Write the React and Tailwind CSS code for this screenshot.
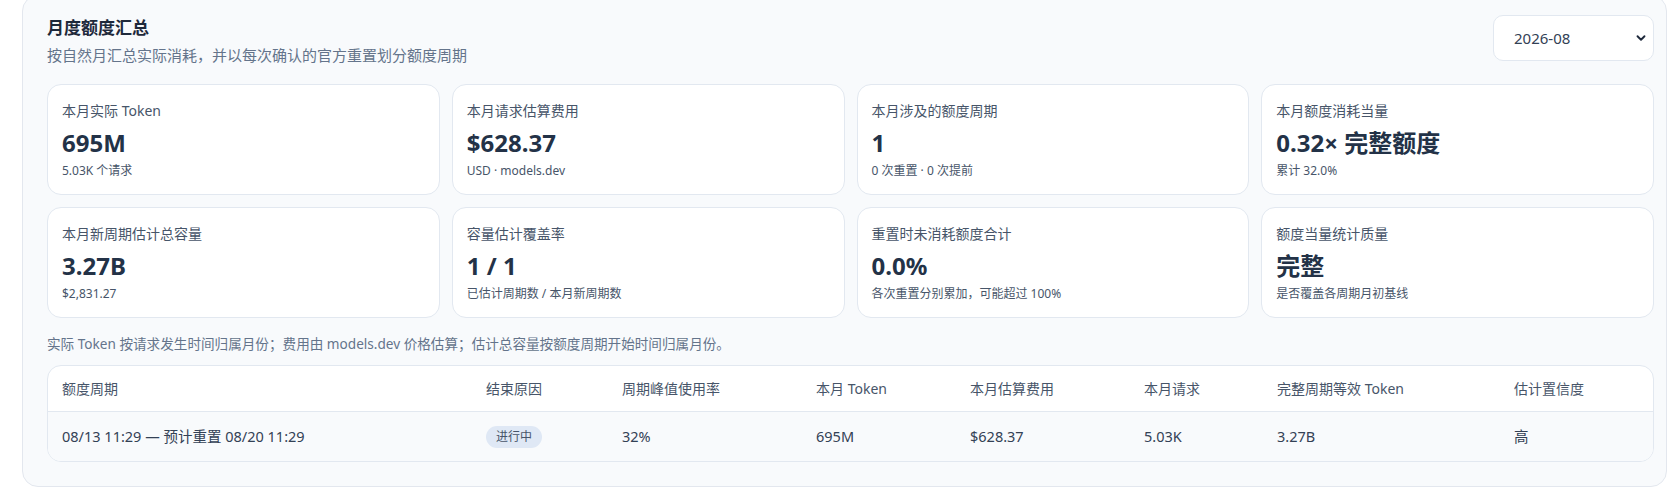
import React from "react";

const FONT = {
  fontFamily: '"Noto Sans", "Noto Sans CJK SC", sans-serif',
};

const stats = [
  { label: "本月实际 Token", value: "695M", sub: "5.03K 个请求" },
  { label: "本月请求估算费用", value: "$628.37", sub: "USD · models.dev" },
  { label: "本月涉及的额度周期", value: "1", sub: "0 次重置 · 0 次提前" },
  { label: "本月额度消耗当量", value: "0.32× 完整额度", sub: "累计 32.0%" },
  { label: "本月新周期估计总容量", value: "3.27B", sub: "$2,831.27" },
  { label: "容量估计覆盖率", value: "1 / 1", sub: "已估计周期数 / 本月新周期数" },
  { label: "重置时未消耗额度合计", value: "0.0%", sub: "各次重置分别累加，可能超过 100%" },
  { label: "额度当量统计质量", value: "完整", sub: "是否覆盖各周期月初基线" },
];

const headers = [
  "额度周期",
  "结束原因",
  "周期峰值使用率",
  "本月 Token",
  "本月估算费用",
  "本月请求",
  "完整周期等效 Token",
  "估计置信度",
];

function StatCard({ label, value, sub }) {
  return (
    <div className="flex h-[111px] flex-col rounded-[14px] border border-[#e2e8f0] bg-white px-[14px] pt-4">
      <div className="text-[14px] leading-5 text-[#475569]">{label}</div>
      <div className="mt-[6px] text-[24px] font-bold leading-8 text-[#233247]">{value}</div>
      <div className="mt-1 text-[12px] leading-4 text-[#475569]">{sub}</div>
    </div>
  );
}

function ChevronDown() {
  return (
    <svg width="14" height="14" viewBox="0 0 24 24" fill="none" stroke="#1e293b" strokeWidth="3.2" strokeLinecap="round" strokeLinejoin="round">
      <path d="M6 9l6 6 6-6" />
    </svg>
  );
}

export default function App() {
  return (
    <div className="min-h-[492px] overflow-hidden bg-white" style={FONT}>
      <div className="ml-[22px] -mt-[5px] w-[1645px] rounded-2xl border border-[#e3e7ee] bg-[#f8fafc] pb-6 pl-6 pr-3 pt-5">
        {/* header */}
        <div className="mb-[18px] flex items-start justify-between">
          <div>
            <h2 className="text-[17px] font-bold leading-6 text-[#1e293b]">月度额度汇总</h2>
            <p className="mt-1 text-[15px] leading-[22px] text-[#64748b]">
              按自然月汇总实际消耗，并以每次确认的官方重置划分额度周期
            </p>
          </div>
          <div className="-mt-px flex h-[46px] w-[161px] items-center justify-between rounded-[10px] border border-[#e2e8f0] bg-white pl-5 pr-[5px] text-[15px] text-[#334155]">
            <span>2026-08</span>
            <ChevronDown />
          </div>
        </div>

        {/* stats grid */}
        <div className="grid grid-cols-4 gap-3">
          {stats.map((s) => (
            <StatCard key={s.label} {...s} />
          ))}
        </div>

        <p className="mt-[15px] text-[13.6px] leading-[22px] text-[#64748b]">
          实际 Token 按请求发生时间归属月份；费用由 models.dev 价格估算；估计总容量按额度周期开始时间归属月份。
        </p>

        {/* cycle table */}
        <div className="mt-[10px] overflow-hidden rounded-[14px] border border-[#e2e8f0] bg-white">
          <div className="grid h-[46px] grid-cols-[424px_136px_194px_154px_174px_133px_237px_1fr] items-center border-b border-[#e2e8f0] text-[14px] text-[#475569]">
            {headers.map((h) => (
              <div key={h} className="px-[14px]">
                {h}
              </div>
            ))}
          </div>
          <div className="grid h-[49px] grid-cols-[424px_136px_194px_154px_174px_133px_237px_1fr] items-center bg-[#f8fafc] text-[14.5px] text-[#334155]">
            <div className="px-[14px]">08/13 11:29 — 预计重置 08/20 11:29</div>
            <div className="px-[14px]">
              <span className="inline-flex h-[22px] items-center rounded-full bg-[#dfe8f5] px-[10px] text-[12px] text-[#475569]">
                进行中
              </span>
            </div>
            <div className="px-[14px]">32%</div>
            <div className="px-[14px]">695M</div>
            <div className="px-[14px]">$628.37</div>
            <div className="px-[14px]">5.03K</div>
            <div className="px-[14px]">3.27B</div>
            <div className="px-[14px]">高</div>
          </div>
        </div>
      </div>
    </div>
  );
}
